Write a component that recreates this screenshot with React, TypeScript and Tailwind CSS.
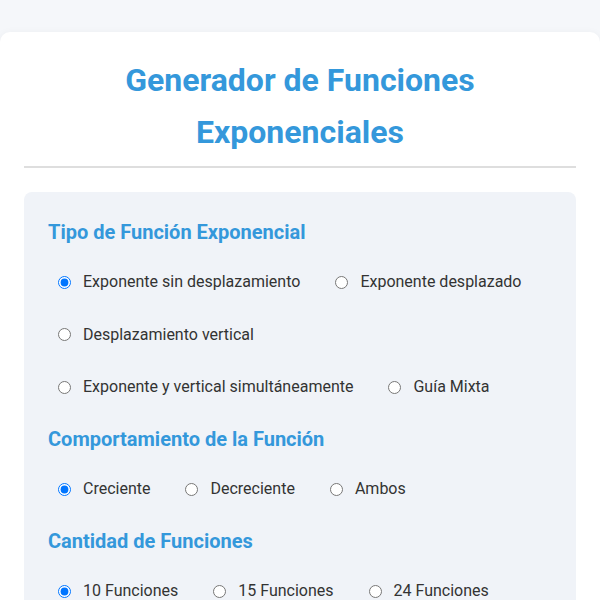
import React from "react";

const groups = [
  {
    title: "Tipo de Función Exponencial",
    name: "tipo",
    options: [
      "Exponente sin desplazamiento",
      "Exponente desplazado",
      "Desplazamiento vertical",
      "Exponente y vertical simultáneamente",
      "Guía Mixta",
    ],
    breakAfter: [1, 2],
  },
  {
    title: "Comportamiento de la Función",
    name: "comportamiento",
    options: ["Creciente", "Decreciente", "Ambos"],
    breakAfter: [],
  },
  {
    title: "Cantidad de Funciones",
    name: "cantidad",
    options: ["10 Funciones", "15 Funciones", "24 Funciones"],
    breakAfter: [],
  },
];

const App = () => {
  return (
    <div className="min-h-screen bg-[#f5f7fa] pt-8" style={{ fontFamily: "Roboto, 'Noto Sans', sans-serif" }}>
      <div className="bg-white rounded-[10px] shadow-[0_2px_10px_rgba(0,0,0,0.06)] px-6 pt-[22px] pb-6">
        <h1 className="text-center text-[32px] leading-[52px] font-bold text-[#3498db] pb-2 border-b-2 border-[#dedede]">
          Generador de Funciones
          <br />
          Exponenciales
        </h1>
        <div className="mt-6 bg-[#f0f3f8] rounded-lg px-6 pt-6 pb-6">
          {groups.map((g) => (
            <div key={g.name} className="mb-[18px]">
              <h2 className="text-[20px] leading-8 font-bold text-[#3498db] mb-4">{g.title}</h2>
              <div className="flex flex-col gap-y-[16.5px] pl-[10px]">
                {splitRows(g.options, g.breakAfter).map((row, ri) => (
                  <div key={ri} className="flex items-center gap-x-[35px] h-9">
                    {row.map((opt) => (
                      <label key={opt} className="flex items-center text-[16px] text-[#333]">
                        <input
                          type="radio"
                          name={g.name}
                          defaultChecked={opt === g.options[0]}
                          className="w-[13px] h-[13px] mr-3 accent-[#0075ff]"
                        />
                        {opt}
                      </label>
                    ))}
                  </div>
                ))}
              </div>
            </div>
          ))}
        </div>
      </div>
    </div>
  );
};

function splitRows(options: string[], breakAfter: number[]) {
  const rows: string[][] = [];
  let cur: string[] = [];
  options.forEach((o, i) => {
    cur.push(o);
    if (breakAfter.includes(i)) {
      rows.push(cur);
      cur = [];
    }
  });
  if (cur.length) rows.push(cur);
  return rows;
}

export default App;
